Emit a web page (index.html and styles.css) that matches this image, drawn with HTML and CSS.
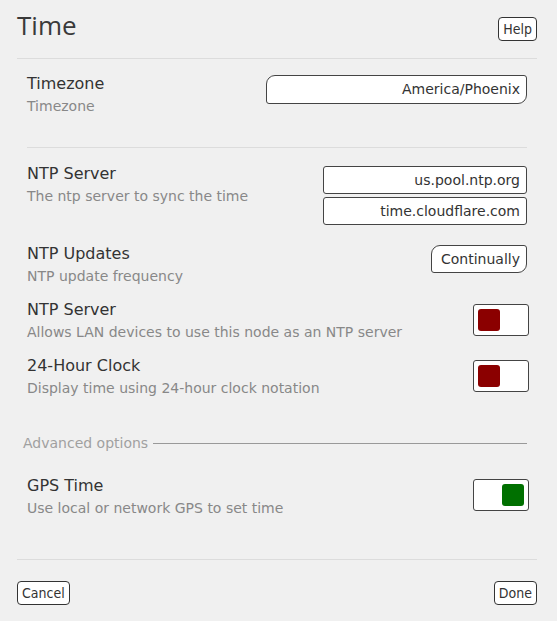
FILE: index.html
```html
<!DOCTYPE html>
<html>
<head>
<meta charset="utf-8">
<link rel="stylesheet" href="styles.css">
</head>
<body>
<div class="page">
  <div class="header">
    <h1 class="title">Time</h1>
    <button class="btn help-btn">Help</button>
  </div>

  <div class="content">
    <div class="row row-tz">
      <div class="text">
        <div class="label">Timezone</div>
        <div class="desc">Timezone</div>
      </div>
      <div class="field field-wide field-round">America/Phoenix</div>
    </div>

    <div class="sep"></div>

    <div class="row row-ntp">
      <div class="text">
        <div class="label">NTP Server</div>
        <div class="desc">The ntp server to sync the time</div>
      </div>
      <div class="field-stack">
        <div class="field field-mid">us.pool.ntp.org</div>
        <div class="field field-mid">time.cloudflare.com</div>
      </div>
    </div>

    <div class="row">
      <div class="text">
        <div class="label">NTP Updates</div>
        <div class="desc">NTP update frequency</div>
      </div>
      <div class="field field-select field-round">Continually</div>
    </div>

    <div class="row">
      <div class="text">
        <div class="label">NTP Server</div>
        <div class="desc">Allows LAN devices to use this node as an NTP server</div>
      </div>
      <div class="toggle"><span class="knob knob-off"></span></div>
    </div>

    <div class="row">
      <div class="text">
        <div class="label">24-Hour Clock</div>
        <div class="desc">Display time using 24-hour clock notation</div>
      </div>
      <div class="toggle"><span class="knob knob-off"></span></div>
    </div>
  </div>

  <div class="advanced">
    <span class="advanced-text">Advanced options</span>
    <span class="advanced-line"></span>
  </div>

  <div class="content">
    <div class="row row-gps">
      <div class="text">
        <div class="label">GPS Time</div>
        <div class="desc">Use local or network GPS to set time</div>
      </div>
      <div class="toggle toggle-on"><span class="knob knob-on"></span></div>
    </div>
  </div>

  <div class="footer">
    <button class="btn">Cancel</button>
    <button class="btn">Done</button>
  </div>
</div>
</body>
</html>
```

FILE: styles.css
```css
html, body {
  margin: 0;
  padding: 0;
  background: #f0f0f0;
}

body {
  font-family: "DejaVu Sans", sans-serif;
  color: #333;
}

.page {
  padding: 0 20px 0 17px;
}

.header {
  display: flex;
  justify-content: space-between;
  align-items: flex-start;
  padding-top: 7px;
  padding-bottom: 15px;
  border-bottom: 1px solid #dcdcdc;
}

.title {
  margin: 0;
  font-family: "Open Sans", sans-serif;
  font-weight: 400;
  font-size: 26px;
  line-height: 36px;
  color: #3a3a3a;
}

.btn {
  font-family: "DejaVu Sans Condensed", "DejaVu Sans", sans-serif;
  font-size: 14px;
  color: #333;
  background: #fff;
  border: 1px solid #333;
  border-radius: 4px;
  height: 24px;
  padding: 0 4px;
  margin: 0;
  line-height: 20px;
}

.help-btn {
  margin-top: 10px;
}

.content {
  padding: 0 10px;
}

.row {
  display: flex;
  justify-content: space-between;
  align-items: flex-start;
  margin-bottom: 13px;
}

.row-tz {
  margin-top: 14px;
  margin-bottom: 0;
}

.row-ntp {
  margin-top: 15px;
  margin-bottom: 18px;
}

.label {
  font-size: 16px;
  line-height: 22px;
  color: #333;
}

.desc {
  margin-top: 1px;
  font-size: 14px;
  line-height: 20px;
  color: #888;
}

.sep {
  margin-top: 31px;
  height: 1px;
  background: #dcdcdc;
}

.field {
  box-sizing: border-box;
  background: #fff;
  border: 1px solid #444;
  border-radius: 3px;
  font-size: 14px;
  color: #333;
  text-align: right;
  padding: 0 6px;
  white-space: nowrap;
}

.field-round {
  border-radius: 9px 3px 9px 3px;
}

.field-wide {
  width: 261px;
  height: 29px;
  line-height: 27px;
  margin-top: 2px;
}

.field-stack {
  display: flex;
  flex-direction: column;
  gap: 3px;
  margin-top: 3px;
}

.field-mid {
  width: 204px;
  height: 28px;
  line-height: 26px;
}

.field-select {
  width: 96px;
  height: 28px;
  line-height: 26px;
  margin-top: 2px;
}

.toggle {
  box-sizing: border-box;
  display: flex;
  width: 56px;
  height: 32px;
  padding: 4px;
  margin-top: 5px;
  margin-right: -2px;
  background: #fff;
  border: 1px solid #444;
  border-radius: 3px;
}

.toggle-on {
  justify-content: flex-end;
  margin-top: 4px;
}

.knob {
  width: 22px;
  height: 22px;
  border-radius: 3px;
}

.knob-off {
  background: #8b0000;
}

.knob-on {
  background: #007000;
}

.advanced {
  display: flex;
  align-items: center;
  gap: 5px;
  margin: 35px 10px 0 6px;
}

.advanced-text {
  font-size: 14px;
  line-height: 20px;
  color: #a0a0a0;
  white-space: nowrap;
}

.advanced-line {
  flex: 1;
  height: 1px;
  background: #999;
}

.row-gps {
  margin-top: 22px;
  margin-bottom: 0;
}

.footer {
  display: flex;
  justify-content: space-between;
  align-items: flex-start;
  margin-top: 41px;
  padding-top: 21px;
  border-top: 1px solid #dcdcdc;
}
```
